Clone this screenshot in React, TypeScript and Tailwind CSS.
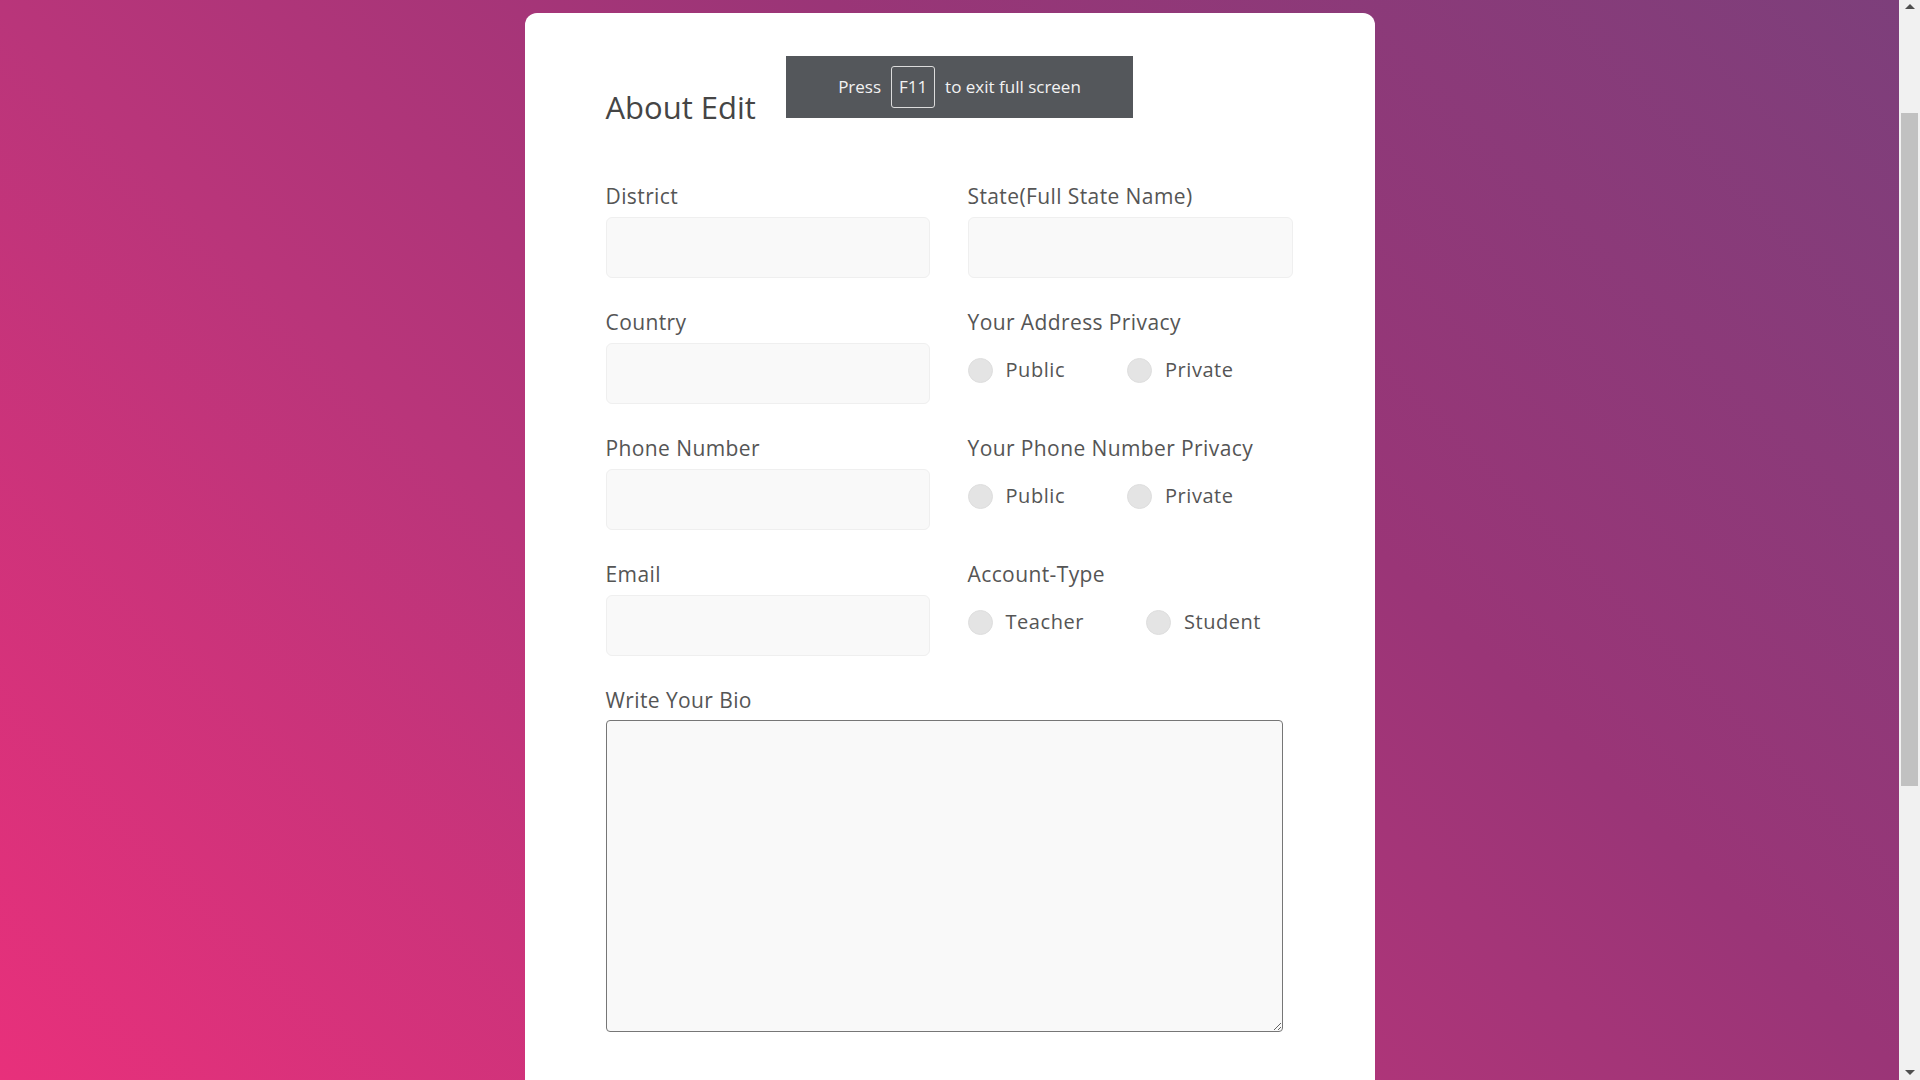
import React from "react";

function TextField({ label }: { label: string }) {
  return (
    <div className="flex flex-col">
      <label className="h-[30px] pt-[1px] text-[21px] leading-[30px] tracking-[0.4px] text-[#555555]">{label}</label>
      <input
        type="text"
        className="mt-[7px] h-[61px] w-full rounded-[6px] border border-[#efefef] bg-[#f9f9f9] outline-none"
      />
    </div>
  );
}

function RadioField({ label, options, name }: { label: string; options: string[]; name: string }) {
  return (
    <div className="flex flex-col">
      <label className="h-[30px] pt-[1px] text-[21px] leading-[30px] tracking-[0.4px] text-[#555555]">{label}</label>
      <div className="mt-[19px] flex h-[30px] items-center gap-[62px]">
        {options.map((o) => (
          <label key={o} className="flex items-center gap-[13px] text-[20px] leading-[30px] tracking-[0.55px] text-[#555555]">
            <input
              type="radio"
              name={name}
              className="h-[25px] w-[25px] appearance-none rounded-full border border-[#dedede] bg-[#e4e4e4]"
            />
            <span>{o}</span>
          </label>
        ))}
      </div>
    </div>
  );
}

export default function App() {
  return (
    <div className="relative flex h-screen w-full overflow-hidden font-['Open_Sans','Noto_Sans',sans-serif]">
      <div className="flex flex-1 justify-center bg-[linear-gradient(45deg,#e8307b_0%,#b9357a_36%,#9a3577_64%,#7d3f7b_100%)] pt-[13px]">
        <div className="h-[1300px] w-[850px] shrink-0 rounded-[12px] bg-white px-[81px] pt-[76px]">
          <h1 className="h-[36px] text-[31px] leading-[36px] text-[#454545]">About Edit</h1>
          <div className="mt-[55px] grid grid-cols-[324px_325px] gap-x-[38px] gap-y-[28px]">
            <TextField label="District" />
            <TextField label="State(Full State Name)" />
            <TextField label="Country" />
            <RadioField label="Your Address Privacy" options={["Public", "Private"]} name="addr" />
            <TextField label="Phone Number" />
            <RadioField label="Your Phone Number Privacy" options={["Public", "Private"]} name="phone" />
            <TextField label="Email" />
            <RadioField label="Account-Type" options={["Teacher", "Student"]} name="acct" />
          </div>
          <div className="mt-[28px] flex flex-col">
            <label className="h-[30px] pt-[1px] text-[21px] leading-[30px] tracking-[0.4px] text-[#555555]">Write Your Bio</label>
            <textarea className="mt-[6px] block h-[312px] w-[677px] rounded-[4px] border border-[#767676] bg-[#f9f9f9] outline-none" />
          </div>
        </div>
      </div>

      <div className="flex w-[21px] shrink-0 flex-col items-center bg-[#f1f1f1]">
        <div className="mt-[4px] h-0 w-0 border-x-[5px] border-b-[5px] border-x-transparent border-b-[#505050]" />
        <div className="mt-[104px] h-[673px] w-[17px] bg-[#c1c1c1]" />
        <div className="flex-1" />
        <div className="mb-[5px] h-0 w-0 border-x-[5px] border-t-[5px] border-x-transparent border-t-[#505050]" />
      </div>

      <div className="absolute left-[786px] top-[56px] flex h-[62px] w-[347px] items-center justify-center gap-[10px] bg-[#54575b] text-[17px] text-[#f2f2f2]">
        <span>Press</span>
        <span className="flex h-[42px] w-[44px] items-center justify-center rounded-[3px] border border-[#dcdcdc]">F11</span>
        <span>to exit full screen</span>
      </div>
    </div>
  );
}
